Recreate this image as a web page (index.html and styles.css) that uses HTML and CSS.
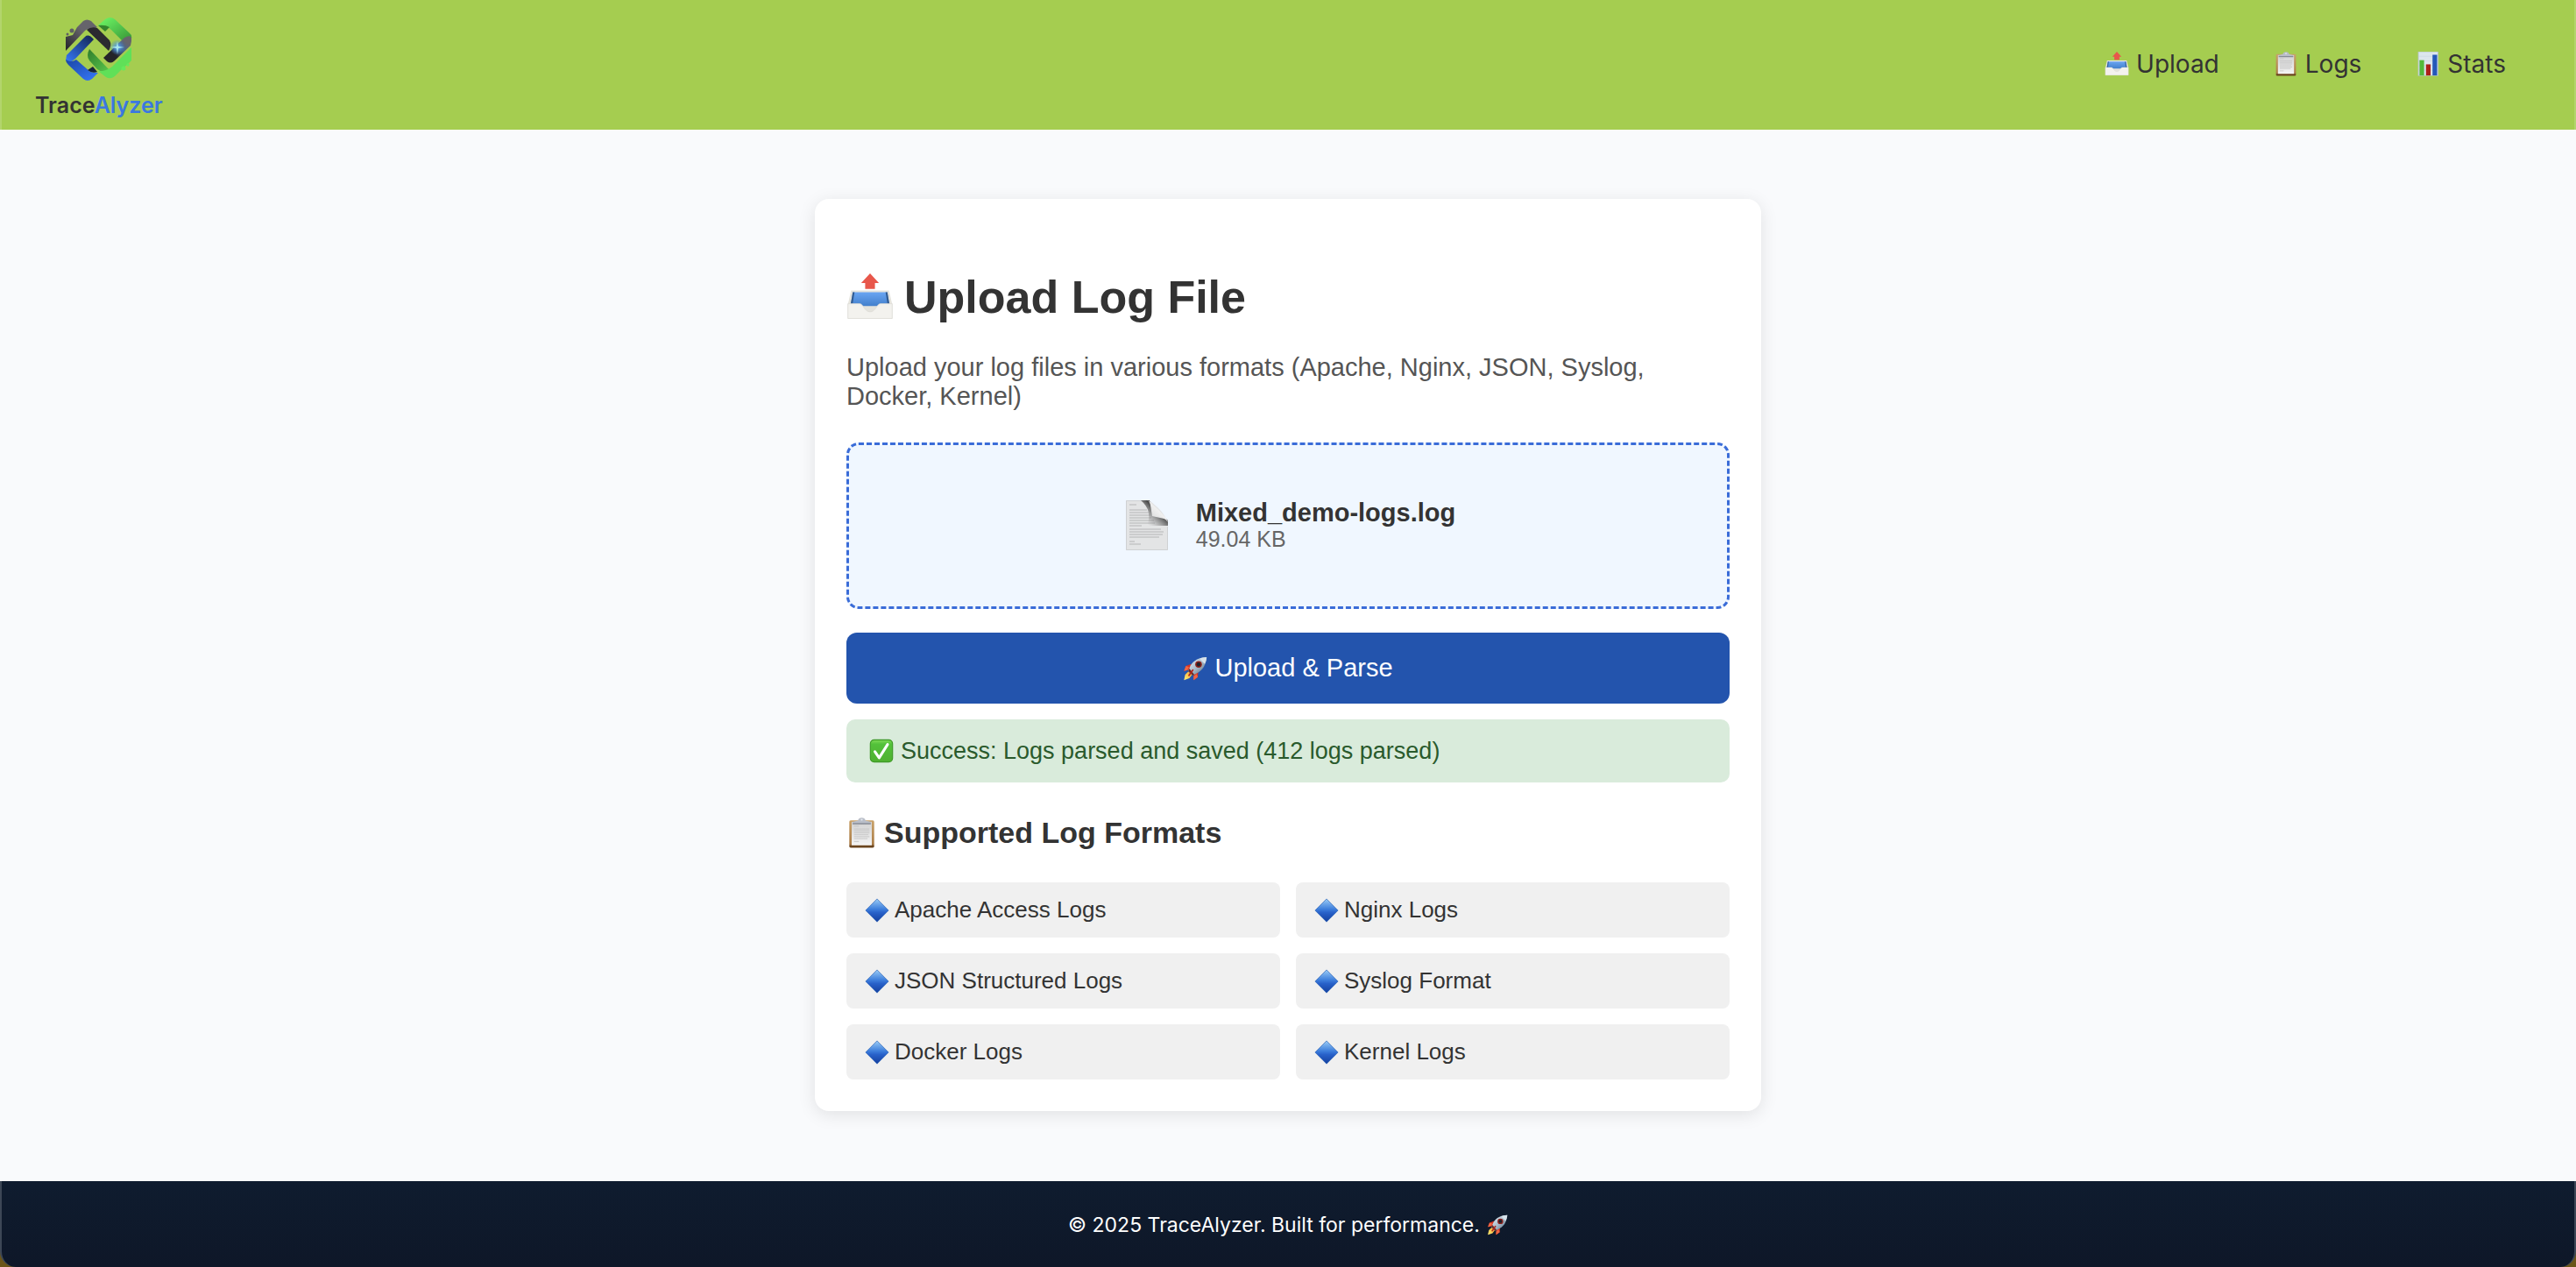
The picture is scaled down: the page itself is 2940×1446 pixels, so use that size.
FILE: index.html
```html
<!DOCTYPE html>
<html lang="en">
<head>
<meta charset="utf-8">
<meta name="viewport" content="width=device-width, initial-scale=1">
<title>TraceAlyzer</title>
<link rel="stylesheet" href="styles.css">
</head>
<body>
<svg class="sprite" aria-hidden="true">
  <defs>
    <linearGradient id="tray-blue" x1="0" y1="0" x2="0" y2="1"><stop offset="0" stop-color="#6aa5f2"/><stop offset="1" stop-color="#4380cc"/></linearGradient>
    <linearGradient id="diamond-blue" x1="0" y1="0" x2="0" y2="1"><stop offset="0" stop-color="#9accf6"/><stop offset=".45" stop-color="#3c7ddb"/><stop offset=".6" stop-color="#2861c9"/><stop offset="1" stop-color="#143f9e"/></linearGradient>
    <linearGradient id="check-green" x1="0" y1="0" x2="0" y2="1"><stop offset="0" stop-color="#7fdb56"/><stop offset=".2" stop-color="#53c13a"/><stop offset="1" stop-color="#4fb030"/></linearGradient>
    <linearGradient id="paper" x1="0" y1="0" x2="0" y2="1"><stop offset="0" stop-color="#d2d2d2"/><stop offset="1" stop-color="#f4f4f4"/></linearGradient>
    <linearGradient id="wood" x1="0" y1="0" x2="0" y2="1"><stop offset="0" stop-color="#c9a26a"/><stop offset=".85" stop-color="#ab7d47"/><stop offset="1" stop-color="#6b4520"/></linearGradient>
    <linearGradient id="curl" x1="1" y1="0" x2="0" y2="1"><stop offset=".3" stop-color="#fafafa"/><stop offset="1" stop-color="#d2d2d2"/></linearGradient>
    <linearGradient id="shade" x1="1" y1="0" x2="0" y2="1"><stop offset=".4" stop-color="#4a4a4a"/><stop offset=".85" stop-color="#999" stop-opacity="0"/></linearGradient>
    <linearGradient id="hull" x1="0" y1="0" x2="1" y2="1"><stop offset="0" stop-color="#f2f6fa"/><stop offset=".5" stop-color="#a9bccb"/><stop offset="1" stop-color="#4a6076"/></linearGradient>
    <linearGradient id="flame" x1="1" y1="0" x2="0" y2="1"><stop offset="0" stop-color="#f6a32a"/><stop offset="1" stop-color="#fff27a"/></linearGradient>
  </defs>
  <symbol id="i-upload" viewBox="0 0 32 32">
    <path d="M16 0 22 6.500H19.300V10.500H12.700V6.500H10z" fill="#e8574b"/>
    <path d="M3.200 11.500H28.800L31 21V30.500H1V21z" fill="#e4e3dd"/>
    <path d="M4.300 12.800H27.700L29.300 22H2.700z" fill="url(#tray-blue)"/>
    <path d="M4.300 12.800 2.700 22H4L5.500 12.800zM27.700 12.800 29.300 22H28L26.500 12.800z" fill="#315b91"/>
    <path d="M1 20.500H9C11.500 20.500 12 26 16 26S20.500 20.500 23 20.500H31V30.500H1z" fill="#f3f2ee" stroke="#d9d8d2" stroke-width=".4"/>
  </symbol>
  <symbol id="i-clipboard" viewBox="0 0 32 32">
    <rect x="3" y="3" width="26" height="28.500" rx="1.500" fill="url(#wood)"/>
    <rect x="5.500" y="4.500" width="21" height="24.500" fill="url(#paper)"/>
    <path d="M8 9h5M8 12h16M8 14h16M8 16h16M8 18h15M8 20h16M8 22h14M8 25h5" stroke="#c2c2c2" stroke-width=".8"/>
    <path d="M6.500 6.500V4.500L12 3.200C12.500 1 14 .3 16 .3S19.500 1 20 3.200L25.500 4.500V6.500z" fill="#b9bec8"/>
    <path d="M6.500 6.500h19" stroke="#707580"/>
    <circle cx="16" cy="2.300" r="1" fill="#e6e9ef"/>
    <path d="M3.500 30h25" stroke="#67431e" stroke-width="1.500"/>
  </symbol>
  <symbol id="i-stats" viewBox="0 0 32 32">
    <rect x="3.500" y="0" width="25.500" height="31" fill="#dce6ee" stroke="#b7c4c7"/>
    <path d="M4 6h25M4 12h25M4 18h25M4 24h25" stroke="#c6d2df" stroke-width=".6"/>
    <path d="M5 11h6v20H5z" fill="#53b93a"/><path d="M13.500 16.500h6V31h-6z" fill="#ad2119"/><path d="M22 4h6v27h-6z" fill="#2458b9"/>
  </symbol>
  <symbol id="i-page" viewBox="0 0 48 57">
    <path d="M0 0H27Q48 16 48 31V57H0z" fill="#e3e4e5"/>
    <path d="M.5.500H27M.5.500V56.500H47.500V30" fill="none" stroke="#cfd1d3"/>
    <path d="M4 5h8M4 11h20M4 14h22M4 17h24M4 20h25M4 23h28M4 26h29M4 29h14M4 33h36M4 36h39M4 39h38M4 42h34M4 47h6M4 50h13" stroke="#b4b5b6" stroke-width="1"/>
    <path d="M17 0H27L30 18L48 22V29H24Q31 12 17 0z" fill="url(#shade)"/>
    <path d="M25 0Q31 6 30 18Q43 17 48 25Q46 18 25 0z" fill="url(#curl)"/>
    <path d="M27 0 48 18V24Q47 20 44 16Q36 5 27 0z" fill="#f0f7ff"/>
  </symbol>
  <symbol id="i-rocket" viewBox="0 0 32 32">
    <path d="M11 10 4 12.500 1.500 19 9 17zM20 19 19.500 27 14 31 14.500 22z" fill="#d93220"/>
    <path d="M7 20 3 24 1.500 31 8.500 28.500 12 24z" fill="url(#flame)"/>
    <path d="M4 12.500 8 14 6 18 1.500 19zM14 31 14 26 18 23 19.500 27z" fill="#ef6644"/>
    <path d="M31 1C22 1 14 5 10 12L7 19 13 25 20 21C27 17 30 10 31 1z" fill="url(#hull)"/>
    <path d="M31 1C27 1 24 2 22 3L28.500 10C30 7 31 4 31 1z" fill="#d7e2ea"/>
    <path d="M7 19 13 25 15 24 8.500 16z" fill="#6b2a24"/>
    <circle cx="20.500" cy="10.500" r="4.300" fill="#8d2019"/><circle cx="20.500" cy="10.500" r="2.500" fill="#1d222d"/>
    <path d="M13 18 8 25" stroke="#b2261d" stroke-width="2" stroke-linecap="round"/>
  </symbol>
  <symbol id="i-check" viewBox="0 0 32 32">
    <rect x="1.500" y="1.500" width="29" height="29" rx="5" fill="url(#check-green)" stroke="#3e9927" stroke-width="1.300"/>
    <path d="M7.500 17 13 25 24 7.500" fill="none" stroke="#fff" stroke-width="3.500" stroke-linecap="round" stroke-linejoin="round"/>
  </symbol>
  <symbol id="i-diamond" viewBox="0 0 32 32">
    <path d="M16 1 31 16 16 31 1 16z" fill="url(#diamond-blue)" stroke="#2d64b8" stroke-width=".8"/>
  </symbol>
</svg>

<header class="topbar">
  <a class="brand" href="#" aria-label="TraceAlyzer">
    <svg class="brand-mark" viewBox="0 0 76 74" aria-hidden="true">
      <defs>
        <linearGradient id="g1" x1="0" y1="1" x2="1" y2="0"><stop offset="0" stop-color="#232228"/><stop offset=".6" stop-color="#66646b"/></linearGradient>
        <linearGradient id="g2" x1="0" y1="0" x2="1" y2="1"><stop offset="0" stop-color="#70fb67"/><stop offset="1" stop-color="#379536"/></linearGradient>
        <linearGradient id="g3" x1="0" y1="1" x2="1" y2="0"><stop offset="0" stop-color="#3679fb"/><stop offset="1" stop-color="#13224d"/></linearGradient>
        <linearGradient id="g4" x1="0" y1="0" x2="1" y2="1"><stop offset="0" stop-color="#1b47a5"/><stop offset="1" stop-color="#3679fb"/></linearGradient>
        <linearGradient id="g5" x1="0" y1="0" x2="1" y2="1"><stop offset="0" stop-color="#2f7c2c"/><stop offset="1" stop-color="#58c64b"/></linearGradient>
        <linearGradient id="g6" x1="0" y1="1" x2="1" y2="0"><stop offset=".35" stop-color="#242329"/><stop offset=".6" stop-color="#48648d"/><stop offset=".8" stop-color="#66646b"/></linearGradient>
        <radialGradient id="g7"><stop offset="0" stop-color="#c7f4ff"/><stop offset=".3" stop-color="#56a0e4" stop-opacity=".8"/><stop offset="1" stop-color="#3f7dd0" stop-opacity="0"/></radialGradient>
      </defs>
      <path d="M0 38V22L8 20 13 11 20 4Q24 1 29 4L36 11 30 14Q25 12 22 15z" fill="url(#g1)"/>
      <circle cx="7" cy="15" r="2.500" fill="#5f6063"/><circle cx="2" cy="19" r="1.500" fill="#5f6063"/>
      <path d="M24 14Q29 10 36 12L50 26Q53 31 49 38L25 15z" fill="#2b2a30"/>
      <path d="M37 9 45 2Q51-2 56 2L72 17Q76 20 75 24L64 26 52 14Q47 9 37 9z" fill="url(#g2)"/>
      <path d="M37 9Q45 8 50 11L45 16z" fill="#34852c"/>
      <path d="M43 46 67 23Q76 18 75 27L74 32 55 50Q51 53 47 50z" fill="url(#g6)"/>
      <path d="M1 43 22 22Q26 18 32 25L11 47Q4 53 0 49z" fill="url(#g3)"/>
      <path d="M0 48Q6 52 12 48L28 62Q32 63 37 63L30 70Q25 74 20 70L3 54Q0 51 0 48z" fill="url(#g4)"/>
      <path d="M25 60 31 56 36 62Q30 64 25 60z" fill="#17223b"/>
      <path d="M27 36 49 59Q44 65 36 59L27 49Q23 44 27 36z" fill="url(#g5)"/>
      <path d="M37 61Q46 62 53 56L75 34V49L70 54 65 58 62 61 56 67Q51 71 46 68z" fill="#60e058"/>
      <circle cx="66" cy="58" r="2.500" fill="#65ea5b"/><circle cx="71" cy="54" r="1.700" fill="#65ea5b"/>
      <circle cx="59" cy="34" r="9" fill="url(#g7)"/>
      <path d="M59 27 60 33 67 34 60 35 59 42 58 35 51 34 58 33z" fill="#a8e8ed"/>
    </svg>
    <span class="brand-name">Trace<span class="brand-accent">Alyzer</span></span>
  </a>
  <nav class="nav" aria-label="Main">
    <a href="#upload"><svg class="emoji"><use href="#i-upload"/></svg>Upload</a>
    <a href="#logs"><svg class="emoji"><use href="#i-clipboard"/></svg>Logs</a>
    <a href="#stats"><svg class="emoji"><use href="#i-stats"/></svg>Stats</a>
  </nav>
</header>

<main class="page">
  <section class="card">
    <h1><svg class="emoji"><use href="#i-upload"/></svg>Upload Log File</h1>
    <p class="intro">Upload your log files in various formats (Apache, Nginx, JSON, Syslog, Docker, Kernel)</p>
    <label class="dropzone">
      <input class="file-input" type="file">
      <svg class="file-icon" aria-hidden="true"><use href="#i-page"/></svg>
      <span class="file-info">
        <strong class="file-name">Mixed_demo-logs.log</strong>
        <span class="file-size">49.04 KB</span>
      </span>
    </label>
    <button class="submit" type="button"><svg class="emoji"><use href="#i-rocket"/></svg>Upload &amp; Parse</button>
    <p class="status" role="status"><svg class="emoji"><use href="#i-check"/></svg>Success: Logs parsed and saved (412 logs parsed)</p>
    <h2><svg class="emoji"><use href="#i-clipboard"/></svg>Supported Log Formats</h2>
    <ul class="formats">
      <li><svg class="emoji"><use href="#i-diamond"/></svg>Apache Access Logs</li>
      <li><svg class="emoji"><use href="#i-diamond"/></svg>Nginx Logs</li>
      <li><svg class="emoji"><use href="#i-diamond"/></svg>JSON Structured Logs</li>
      <li><svg class="emoji"><use href="#i-diamond"/></svg>Syslog Format</li>
      <li><svg class="emoji"><use href="#i-diamond"/></svg>Docker Logs</li>
      <li><svg class="emoji"><use href="#i-diamond"/></svg>Kernel Logs</li>
    </ul>
  </section>
</main>

<footer class="footer">
  <p>© 2025 TraceAlyzer. Built for performance.<svg class="emoji"><use href="#i-rocket"/></svg></p>
</footer>
</body>
</html>
```
FILE: styles.css
```css
* {
  box-sizing: border-box;
}

html {
  background: #6b5518;
}

body {
  margin: 0;
  min-height: 100vh;
  display: flex;
  flex-direction: column;
  font-family: "Liberation Sans", Arial, sans-serif;
  font-size: 29px;
  color: #333;
}

h1, h2, p, ul {
  margin: 0;
}

.sprite {
  position: absolute;
  width: 0;
  height: 0;
}

.emoji {
  flex: none;
  width: 28px;
  height: 28px;
}

.topbar {
  display: flex;
  justify-content: space-between;
  align-items: center;
  padding: 20px 78px 12px 38px;
  background: #a5cd50;
  border: solid #b3d56c;
  border-width: 0 2px;
  font-family: Inter, sans-serif;
}

.brand {
  display: flex;
  flex-direction: column;
  align-items: center;
  gap: 10px;
  text-decoration: none;
}

.brand-mark {
  width: 76px;
  height: 74px;
}

.brand-name {
  font-size: 25px;
  font-weight: 600;
  line-height: 32px;
  color: #333;
}

.brand-accent {
  color: #3b78e0;
}

.nav {
  display: flex;
  gap: 62px;
  padding-bottom: 10px;
}

.nav a {
  display: flex;
  align-items: center;
  gap: 8px;
  font-size: 28px;
  color: #333;
  text-decoration: none;
}

.page {
  flex: 1;
  padding: 79px 24px 80px;
  background: #f9fafc;
}

.card {
  display: flex;
  flex-direction: column;
  max-width: 1080px;
  margin: 0 auto;
  padding: 72px 36px 36px;
  background: #fff;
  border-radius: 16px;
  box-shadow: 0 4px 20px rgba(0, 0, 0, 0.1);
}

h1 {
  display: flex;
  align-items: center;
  gap: 12px;
  font-size: 52px;
  line-height: 80px;
}

h1 .emoji {
  width: 54px;
  height: 54px;
}

.intro {
  margin: 24px 0 36px;
  line-height: 33px;
  color: #555;
}

.dropzone {
  position: relative;
  display: flex;
  justify-content: center;
  align-items: center;
  gap: 32px;
  height: 190px;
  padding: 0 0 2px 6px;
  background: #f0f7ff;
  border: 3px dashed #3a6cd8;
  border-radius: 14px;
}

.file-input {
  position: absolute;
  inset: 0;
  opacity: 0;
}

.file-icon {
  width: 48px;
  height: 57px;
}

.file-info {
  display: flex;
  flex-direction: column;
}

.file-name {
  line-height: 32px;
}

.file-size {
  font-size: 25px;
  line-height: 28px;
  color: #666;
}

.submit {
  display: flex;
  justify-content: center;
  align-items: center;
  gap: 8px;
  margin: 27px 0 18px;
  padding: 24px;
  border: 0;
  border-radius: 12px;
  background: #2354ad;
  font: inherit;
  line-height: 33px;
  color: #fff;
}

.status {
  display: flex;
  align-items: center;
  gap: 8px;
  padding: 19px 26px;
  border-radius: 10px;
  background: #d9ebdb;
  font-size: 27px;
  line-height: 34px;
  color: #2a5a2c;
}

h2 {
  display: flex;
  align-items: center;
  gap: 8px;
  margin: 38px 0;
  font-size: 34px;
  line-height: 38px;
}

h2 .emoji {
  width: 35px;
  height: 35px;
}

.formats {
  display: grid;
  grid-template-columns: 1fr 1fr;
  gap: 18px;
  padding: 0;
  list-style: none;
}

.formats li {
  display: flex;
  align-items: center;
  gap: 6px;
  padding: 16px 21px;
  border-radius: 8px;
  background: #f0f0f0;
  font-size: 26px;
  line-height: 31px;
}

.footer {
  padding: 34px 0 32px;
  background: linear-gradient(#0f1c2f, #0e1728);
  border: solid #3d4756;
  border-width: 0 2px;
  border-radius: 0 0 18px 18px;
  font-family: Inter, sans-serif;
}

.footer p {
  display: flex;
  justify-content: center;
  align-items: center;
  gap: 8px;
  font-size: 23px;
  line-height: 32px;
  color: #fff;
}

.footer .emoji {
  width: 24px;
  height: 24px;
}
```
